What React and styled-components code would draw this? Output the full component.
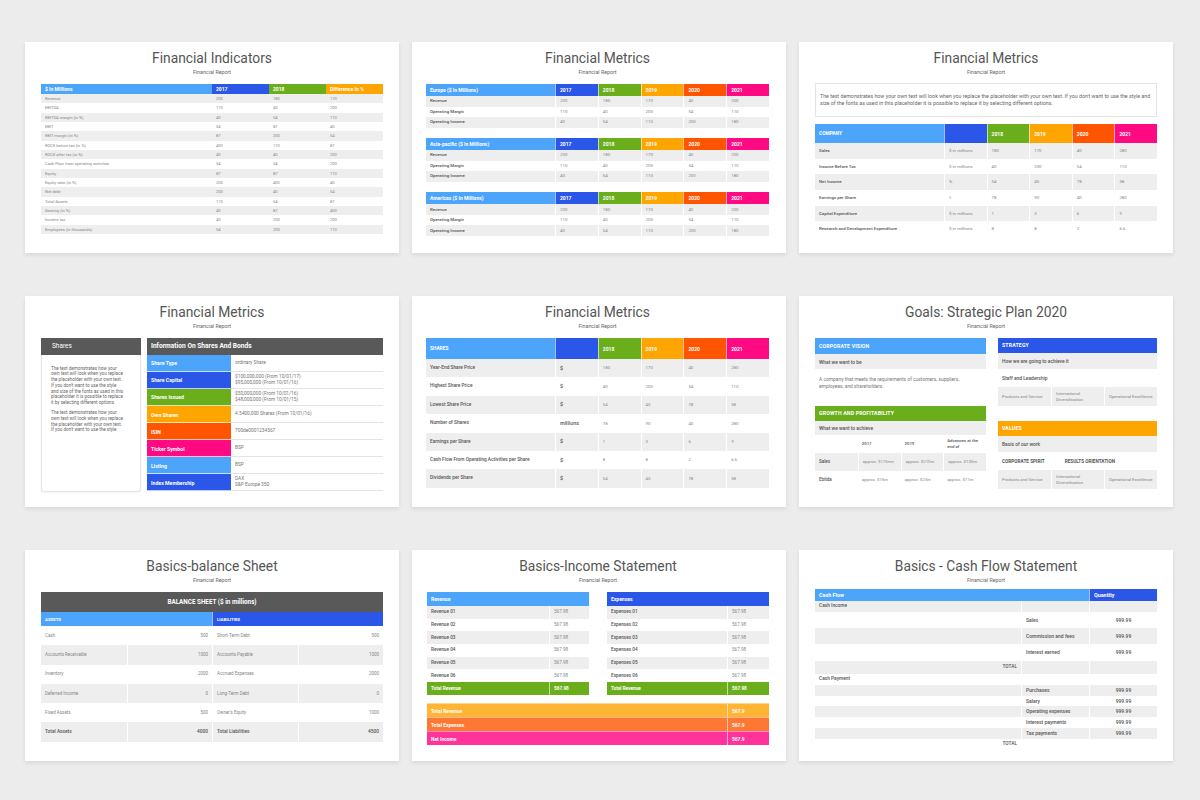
import React from 'react'
import styled, { createGlobalStyle } from 'styled-components'

// palette used by every slide header
const C = {
  sky: '#4da5fb',
  blue: '#2b57e9',
  green: '#6aae1b',
  orange: '#ffa502',
  red: '#ff5500',
  pink: '#ff0a82',
  dark: '#595959',
  row: '#eeeeee',
  lorange: '#ffb433',
  morange: '#ff7833',
  lpink: '#ff3399',
}

const GlobalStyle = createGlobalStyle`
  html, body { margin: 0; padding: 0; background: #ececec; }
  body { font-family: Roboto, "Liberation Sans", sans-serif; }
  * { box-sizing: border-box; }
`

const Page = styled.div`
  width: 1200px;
  height: 800px;
  display: grid;
  grid-template-columns: repeat(3, 374px);
  grid-auto-rows: 211px;
  column-gap: 13px;
  row-gap: 43px;
  padding: 42px 0 0 25px;
`

const Card = styled.section`
  background: #fff;
  box-shadow: 0 2px 4px rgba(0, 0, 0, 0.09);
  display: flex;
  flex-direction: column;
  padding: 7px ${p => p.$pr ?? 16}px 0 ${p => p.$pl ?? 16}px;
  overflow: hidden;
`

const Title = styled.h2`
  margin: 0;
  font-size: 13.8px;
  line-height: 19px;
  font-weight: 400;
  color: #555;
  text-align: center;
`

const Subtitle = styled.div`
  font-size: 5.3px;
  line-height: 8px;
  color: #666;
  text-align: center;
  margin-bottom: ${p => p.$mb ?? 8}px;
`

const Row = styled.div`
  display: grid;
  grid-template-columns: ${p => p.$cols};
  height: ${p => p.$h}px;
  background: ${p => p.$bg || 'transparent'};
  margin-bottom: ${p => p.$mb || 0}px;
`

const HeadCell = styled.div`
  display: flex;
  align-items: center;
  justify-content: ${p => (p.$center ? 'center' : 'flex-start')};
  padding: 0 4px;
  background: ${p => p.$bg};
  color: #fff;
  font-size: ${p => p.$fs || 5}px;
  font-weight: 700;
  white-space: nowrap;
  overflow: hidden;
  border-left: ${p => (p.$sep ? '1px solid rgba(255,255,255,0.6)' : 'none')};
  grid-column: ${p => (p.$span ? `span ${p.$span}` : 'auto')};
`

const Cell = styled.div`
  display: flex;
  align-items: center;
  justify-content: ${p => (p.$align === 'right' ? 'flex-end' : p.$align === 'center' ? 'center' : 'flex-start')};
  padding: 0 4px;
  color: ${p => (p.$strong ? '#555' : '#868686')};
  font-size: ${p => p.$fs || 4.5}px;
  font-weight: ${p => (p.$strong ? 500 : 400)};
  line-height: 1.3;
  white-space: ${p => (p.$wrap ? 'normal' : 'nowrap')};
  overflow: hidden;
  border-left: ${p => (p.$sep ? '1px solid #fff' : 'none')};
  background: ${p => p.$bg || 'transparent'};
`

const stripe = (i, first = true) => ((i % 2 === 0) === first ? C.row : '#fff')

/* ---------- slide 1 ---------- */
const indicators = [
  ['Revenue', 200, 180, 170],
  ['EBITDA', 110, 40, 200],
  ['EBITDA margin (in %)', 40, 54, 110],
  ['EBIT', 54, 87, 40],
  ['EBIT margin (in %)', 87, 200, 54],
  ['ROCE before tax (in %)', 400, 110, 87],
  ['ROCE after tax (in %)', 40, 40, 200],
  ['Cash Flow from operating activities', 54, 54, 200],
  ['Equity', 87, 87, 110],
  ['Equity ratio (in %)', 200, 400, 40],
  ['Net debt', 200, 40, 54],
  ['Total Assets', 110, 54, 87],
  ['Gearing (in %)', 40, 87, 400],
  ['Income tax', 40, 200, 200],
  ['Employees (in thousands)', 54, 200, 110],
]

const IndicatorsSlide = () => {
  const cols = '171px 57px 57px 57px'
  return (
    <Card>
      <Title>Financial Indicators</Title>
      <Subtitle>Financial Report</Subtitle>
      <Row $cols={cols} $h={10}>
        <HeadCell $bg={C.sky}>$ In Millions</HeadCell>
        <HeadCell $bg={C.blue}>2017</HeadCell>
        <HeadCell $bg={C.green}>2018</HeadCell>
        <HeadCell $bg={C.orange}>Difference In %</HeadCell>
      </Row>
      {indicators.map((r, i) => (
        <Row key={i} $cols={cols} $h={9.33} $bg={stripe(i)}>
          {r.map((v, j) => (
            <Cell key={j} $fs={4.1}>{v}</Cell>
          ))}
        </Row>
      ))}
    </Card>
  )
}

/* ---------- slide 2 ---------- */
const years = [['2017', C.blue], ['2018', C.green], ['2019', C.orange], ['2020', C.red], ['2021', C.pink]]
const regionRows = [
  ['Revenue', 200, 180, 170, 40, 200],
  ['Operating Margin', 110, 40, 200, 54, 110],
  ['Operating Income', 40, 54, 110, 200, 180],
]

const Region = styled.div`
  margin-bottom: 10.6px;
`

const RegionSlide = () => {
  const cols = '129px repeat(5, 1fr)'
  return (
    <Card $pl={14} $pr={17}>
      <Title>Financial Metrics</Title>
      <Subtitle>Financial Report</Subtitle>
      {['Europe ($ In Millions)', 'Asia-pacific ($ In Millions)', 'Americas ($ In Millions)'].map(name => (
        <Region key={name}>
          <Row $cols={cols} $h={12}>
            <HeadCell $bg={C.sky}>{name}</HeadCell>
            {years.map(([y, c]) => (
              <HeadCell key={y} $bg={c} $sep>{y}</HeadCell>
            ))}
          </Row>
          {regionRows.map((r, i) => (
            <Row key={i} $cols={cols} $h={10.5} $bg={stripe(i)}>
              {r.map((v, j) => (
                <Cell key={j} $strong={j === 0} $sep={j > 0} $fs={4.4}>{v}</Cell>
              ))}
            </Row>
          ))}
        </Region>
      ))}
    </Card>
  )
}

/* ---------- slide 3 ---------- */
const companyRows = [
  ['Sales', '$ in millions', 180, 170, 40, 280],
  ['Income Before Tax', '$ in millions', 40, 200, 54, 110],
  ['Net Income', '%', 54, 45, 78, 58],
  ['Earnings per Share', '€', 78, 90, 40, 280],
  ['Capital Expenditure', '$ in millions', 1, 3, 6, 9],
  ['Research and Development Expenditure', '$ in millions', 8, 8, 2, 6.6],
]

const Note = styled.p`
  margin: 0 0 7px;
  height: 34px;
  border: 1px solid #e4e4e4;
  padding: 0 4px;
  display: flex;
  align-items: center;
  font-size: 5.3px;
  line-height: 7px;
  color: #666;
`

const placeholder =
  "The text demonstrates how your own text will look when you replace the placeholder with your own text. If you don't want to use the style and size of the fonts as used in this placeholder it is possible to replace it by selecting different options."

const CompanySlide = () => {
  const cols = '129px repeat(5, 1fr)'
  return (
    <Card>
      <Title>Financial Metrics</Title>
      <Subtitle $mb={7}>Financial Report</Subtitle>
      <Note>{placeholder}</Note>
      <Row $cols={cols} $h={19}>
        <HeadCell $bg={C.sky} $fs={4.8}>COMPANY</HeadCell>
        <HeadCell $bg={C.blue} $sep />
        {years.slice(1).map(([y, c]) => (
          <HeadCell key={y} $bg={c} $sep>{y}</HeadCell>
        ))}
      </Row>
      {companyRows.map((r, i) => (
        <Row key={i} $cols={cols} $h={15.7} $bg={stripe(i)}>
          {r.map((v, j) => (
            <Cell key={j} $strong={j === 0} $sep={j > 0} $fs={4.4}>{v}</Cell>
          ))}
        </Row>
      ))}
    </Card>
  )
}

/* ---------- slide 4 ---------- */
const Split = styled.div`
  display: flex;
  gap: ${p => p.$gap}px;
  height: ${p => p.$h}px;
`

const SidePanel = styled.div`
  width: 100px;
  display: flex;
  flex-direction: column;
`

const DarkBar = styled.div`
  height: ${p => p.$h || 16.7}px;
  background: ${C.dark};
  color: #fff;
  display: flex;
  align-items: center;
  justify-content: ${p => (p.$center ? 'center' : 'flex-start')};
  padding-left: ${p => p.$pl ?? 4}px;
  font-size: ${p => p.$fs || 6.5}px;
  font-weight: ${p => (p.$bold ? 700 : 400)};
`

const PanelText = styled.div`
  flex: 1;
  border: 1px solid #e6e6e6;
  border-top: none;
  border-radius: 0 0 3px 3px;
  box-shadow: 0 1px 2px rgba(0, 0, 0, 0.05);
  padding: 11px 15px 0 9px;
  font-size: 4.6px;
  line-height: 5.7px;
  color: #666;
  p { margin: 0 0 4.5px; }
`

const InfoTable = styled.div`
  flex: 1;
  display: flex;
  flex-direction: column;
`

const InfoRow = styled.div`
  display: grid;
  grid-template-columns: 84px 1fr;
  height: 17.1px;
`

const InfoLabel = styled.div`
  background: ${p => p.$bg};
  color: #fff;
  font-weight: 700;
  font-size: 5.2px;
  display: flex;
  align-items: center;
  padding-left: 4px;
  box-shadow: inset 0 -1px 0 rgba(255, 255, 255, 0.7);
`

const InfoValue = styled.div`
  color: #777;
  font-size: 4.8px;
  line-height: 6px;
  display: flex;
  flex-direction: column;
  justify-content: center;
  padding-left: 4px;
  border-bottom: 1px solid #e4e4e4;
`

const shares = [
  ['Share Type', C.sky, ['ordinary Share']],
  ['Share Capital', C.blue, ['$100,000,000 (From 10/01/17)', '$95,000,000 (From 10/01/16)']],
  ['Shares Issued', C.green, ['$50,000,000 (From 10/01/16)', '$48,000,000 (From 10/01/15)']],
  ['Own Shares', C.orange, ['4.5400,000 Shares (From 10/01/16)']],
  ['ISIN', C.red, ['700de0001234567']],
  ['Ticker Symbol', C.pink, ['BSP']],
  ['Listing', C.sky, ['BSP']],
  ['Index Membership', C.blue, ['DAX', 'S&P Europe 350']],
]

const SharesSlide = () => (
  <Card>
    <Title>Financial Metrics</Title>
    <Subtitle $mb={8}>Financial Report</Subtitle>
    <Split $gap={6} $h={153.5}>
      <SidePanel>
        <DarkBar $pl={11}>Shares</DarkBar>
        <PanelText>
          <p>{placeholder}</p>
          <p>The text demonstrates how your own text will look when you replace the placeholder with your own text. If you don't want to use the style</p>
        </PanelText>
      </SidePanel>
      <InfoTable>
        <DarkBar $bold $fs={6.6}>Information On Shares And Bonds</DarkBar>
        {shares.map(([label, bg, lines]) => (
          <InfoRow key={label}>
            <InfoLabel $bg={bg}>{label}</InfoLabel>
            <InfoValue>
              {lines.map(l => (
                <span key={l}>{l}</span>
              ))}
            </InfoValue>
          </InfoRow>
        ))}
      </InfoTable>
    </Split>
  </Card>
)

/* ---------- slide 5 ---------- */
const shareRows = [
  ['Year-End Share Price', '$', 180, 170, 40, 280],
  ['Highest Share Price', '$', 40, 200, 54, 110],
  ['Lowest Share Price', '$', 54, 45, 78, 58],
  ['Number of Shares', 'millions', 78, 90, 40, 280],
  ['Earnings per Share', '$', 1, 3, 6, 9],
  ['Cash Flow From Operating Activities per Share', '$', 8, 8, 2, 6.6],
  ['Dividends per Share', '$', 54, 45, 78, 58],
]

const SharePriceSlide = () => {
  const cols = '129px repeat(5, 1fr)'
  return (
    <Card $pl={14} $pr={17}>
      <Title>Financial Metrics</Title>
      <Subtitle $mb={8}>Financial Report</Subtitle>
      <Row $cols={cols} $h={21}>
        <HeadCell $bg={C.sky} $fs={4.8}>SHARES</HeadCell>
        <HeadCell $bg={C.blue} $sep />
        {years.slice(1).map(([y, c]) => (
          <HeadCell key={y} $bg={c} $sep>{y}</HeadCell>
        ))}
      </Row>
      {shareRows.map((r, i) => (
        <Row key={i} $cols={cols} $h={18.4} $bg={stripe(i)}>
          {r.map((v, j) => (
            <Cell key={j} $strong={j < 2} $sep={j > 0} $fs={j === 1 ? 5.4 : j === 0 ? 4.8 : 4.3}>{v}</Cell>
          ))}
        </Row>
      ))}
    </Card>
  )
}

/* ---------- slide 6 ---------- */
const PlanCol = styled.div`
  width: ${p => p.$w}px;
  display: flex;
  flex-direction: column;
`

const PlanHead = styled.div`
  height: ${p => p.$h || 14.6}px;
  background: ${p => p.$bg};
  color: #fff;
  font-weight: 700;
  font-size: 5.2px;
  letter-spacing: 0.15px;
  display: flex;
  align-items: center;
  padding-left: 4px;
  margin-top: ${p => p.$mt || 0}px;
`

const PlanLine = styled.div`
  height: ${p => p.$h}px;
  background: ${p => (p.$gray ? C.row : '#fff')};
  color: #555;
  font-weight: 500;
  font-size: 4.9px;
  display: flex;
  align-items: center;
  padding-left: 4px;
`

const PlanText = styled.p`
  margin: 0;
  height: 37px;
  padding: 7px 4px 0;
  font-size: 4.9px;
  line-height: 6.5px;
  color: #777;
`

const TripleRow = styled.div`
  height: 18.5px;
  background: ${C.row};
  display: grid;
  grid-template-columns: repeat(3, 1fr);
`

const SpiritRow = styled.div`
  height: 18.3px;
  display: grid;
  grid-template-columns: 1fr 1fr 1fr;
  align-items: center;
  color: #555;
  font-weight: 700;
  font-size: 4.7px;
  padding-left: 4px;
  span:last-child { grid-column: span 2; padding-left: 11px; }
`

const triple = ['Products and Service', 'International Diversification', 'Operational Excellence']

const PlanSlide = () => {
  const cols = 'repeat(4, 1fr)'
  return (
    <Card>
      <Title>Goals: Strategic Plan 2020</Title>
      <Subtitle $mb={8}>Financial Report</Subtitle>
      <Split $gap={12} $h={152}>
        <PlanCol $w={171}>
          <PlanHead $bg={C.sky} $h={16}>CORPORATE VISION</PlanHead>
          <PlanLine $gray $h={15}>What we want to be</PlanLine>
          <PlanText>A company that meets the requirements of customers, suppliers, employees, and shareholders.</PlanText>
          <PlanHead $bg={C.green}>GROWTH AND PROFITABILITY</PlanHead>
          <PlanLine $gray $h={14}>What we want to achieve</PlanLine>
          <Row $cols={cols} $h={18}>
            <Cell />
            <Cell $strong $fs={4.3}>2017</Cell>
            <Cell $strong $fs={4.3}>2019</Cell>
            <Cell $strong $wrap $fs={4.3}>Advances at the end of</Cell>
          </Row>
          <Row $cols={cols} $h={18.3} $bg={C.row}>
            <Cell $strong $fs={4.5}>Sales</Cell>
            <Cell $sep $wrap $fs={4.3}>approx. $175mn</Cell>
            <Cell $sep $fs={4.3}>approx. $210m</Cell>
            <Cell $sep $fs={4.3}>approx. $130m</Cell>
          </Row>
          <Row $cols={cols} $h={18.7}>
            <Cell $strong $fs={4.5}>Ebitda</Cell>
            <Cell $fs={4.3}>approx. $16m</Cell>
            <Cell $fs={4.3}>approx. $23m</Cell>
            <Cell $fs={4.3}>approx. $11m</Cell>
          </Row>
        </PlanCol>
        <PlanCol $w={159}>
          <PlanHead $bg={C.blue}>STRATEGY</PlanHead>
          <PlanLine $gray $h={16.4}>How we are going to achieve it</PlanLine>
          <PlanLine $h={18.3}>Staff and Leadership</PlanLine>
          <TripleRow>
            {triple.map((t, j) => (
              <Cell key={t} $wrap $sep={j > 0} $fs={4.3}>{t}</Cell>
            ))}
          </TripleRow>
          <PlanHead $bg={C.orange} $mt={15.3}>VALUES</PlanHead>
          <PlanLine $gray $h={16.3}>Basis of our work</PlanLine>
          <SpiritRow>
            <span>CORPORATE SPIRIT</span>
            <span>RESULTS ORIENTATION</span>
          </SpiritRow>
          <TripleRow>
            {triple.map((t, j) => (
              <Cell key={t} $wrap $sep={j > 0} $fs={4.3}>{t}</Cell>
            ))}
          </TripleRow>
        </PlanCol>
      </Split>
    </Card>
  )
}

/* ---------- slide 7 ---------- */
const balance = [
  ['Cash', 500, 'Short-Term Debt', 500],
  ['Accounts Receivable', 1000, 'Accounts Payable', 1000],
  ['Inventory', 2000, 'Accrued Expenses', 2000],
  ['Deferred Income', 0, 'Long-Term Debt', 0],
  ['Fixed Assets', 500, "Owner's Equity", 1000],
  ['Total Assets', 4000, 'Total Liabilities', 4500],
]

const BalanceSlide = () => {
  const cols = 'repeat(4, 1fr)'
  return (
    <Card>
      <Title>Basics-balance Sheet</Title>
      <Subtitle $mb={8}>Financial Report</Subtitle>
      <DarkBar $h={20} $center $pl={0} $bold $fs={6.3}>BALANCE SHEET ($ in millions)</DarkBar>
      <Row $cols="1fr 1fr" $h={14}>
        <HeadCell $bg={C.sky} $fs={4.3}>ASSETS</HeadCell>
        <HeadCell $bg={C.blue} $fs={4.3} $sep>LIABILITIES</HeadCell>
      </Row>
      {balance.map((r, i) => {
        const total = i === balance.length - 1
        return (
          <Row key={i} $cols={cols} $h={19.3} $bg={stripe(i, false)}>
            {r.map((v, j) => (
              <Cell key={j} $align={j % 2 ? 'right' : 'left'} $sep={j > 0} $strong={total} $fs={total ? 4.8 : 4.5}>
                {v}
              </Cell>
            ))}
          </Row>
        )
      })}
    </Card>
  )
}

/* ---------- slide 8 ---------- */
const Ledger = styled.div`
  width: 162px;
`

const SumBlock = styled.div`
  margin-top: 8px;
`

const SumBar = styled.div`
  display: grid;
  grid-template-columns: 1fr 42px;
  height: 14.1px;
  background: ${p => p.$bg};
  border-top: 1px solid rgba(255, 255, 255, 0.45);
  color: #fff;
  font-weight: 700;
  font-size: 4.9px;
  span { display: flex; align-items: center; padding-left: 4px; }
  span + span { border-left: 1px solid rgba(255, 255, 255, 0.6); }
`

const LedgerTable = ({ name, bg, cols, label }) => (
  <Ledger>
    <Row $cols="1fr" $h={14.3}>
      <HeadCell $bg={bg}>{name}</HeadCell>
    </Row>
    {[1, 2, 3, 4, 5, 6].map((n, i) => (
      <Row key={n} $cols={cols} $h={12.7} $bg={stripe(i)}>
        <Cell $strong $fs={4.7}>{label} 0{n}</Cell>
        <Cell $sep $fs={4.6}>567.98</Cell>
      </Row>
    ))}
    <Row $cols={cols} $h={13}>
      <HeadCell $bg={C.green} $fs={4.7}>Total Revenue</HeadCell>
      <HeadCell $bg={C.green} $fs={4.7} $sep>567.98</HeadCell>
    </Row>
  </Ledger>
)

const IncomeSlide = () => (
  <Card $pl={15} $pr={17}>
    <Title>Basics-Income Statement</Title>
    <Subtitle $mb={7.7}>Financial Report</Subtitle>
    <Split $gap={18} $h={103.5}>
      <LedgerTable name="Revenue" bg={C.sky} cols="122px 40px" label="Revenue" />
      <LedgerTable name="Expenses" bg={C.blue} cols="120px 42px" label="Expenses" />
    </Split>
    <SumBlock>
      <SumBar $bg={C.lorange}><span>Total Revenue</span><span>567.9</span></SumBar>
      <SumBar $bg={C.morange}><span>Total Expenses</span><span>567.9</span></SumBar>
      <SumBar $bg={C.lpink}><span>Net Income</span><span>567.9</span></SumBar>
    </SumBlock>
  </Card>
)

/* ---------- slide 9 ---------- */
const cash = [
  ['Cash Income', '', '', 10.3, true],
  ['', 'Sales', '999.99', 16.7, false],
  ['', 'Commission and fees', '999.99', 16, true],
  ['', 'Interest earned', '999.99', 16.3, false],
  ['TOTAL', '', '', 13.7, true],
  ['Cash Payment', '', '', 10.7, false],
  ['', 'Purchases', '999.99', 10.6, true],
  ['', 'Salary', '999.99', 10.7, false],
  ['', 'Operating expenses', '999.99', 10.7, true],
  ['', 'Interest payments', '999.99', 10.6, false],
  ['', 'Tax payments', '999.99', 11.4, true],
  ['TOTAL', '', '', 10.5, false],
]

const CashSlide = () => {
  const cols = '206px 68px 68px'
  return (
    <Card>
      <Title>Basics - Cash Flow Statement</Title>
      <Subtitle $mb={5}>Financial Report</Subtitle>
      <Row $cols={cols} $h={12.3}>
        <HeadCell $bg={C.sky} $span={2} $fs={5.4}>Cash Flow</HeadCell>
        <HeadCell $bg={C.blue} $sep $fs={5.4}>Quantity</HeadCell>
      </Row>
      {cash.map(([a, b, c, h, gray], i) => (
        <Row key={i} $cols={cols} $h={h} $bg={gray ? C.row : '#fff'}>
          <Cell $strong $fs={4.8} $align={a === 'TOTAL' ? 'right' : 'left'}>{a}</Cell>
          <Cell $strong $sep $fs={5}>{b}</Cell>
          <Cell $strong $sep $fs={5} $align="center">{c}</Cell>
        </Row>
      ))}
    </Card>
  )
}

const App = () => (
  <>
    <GlobalStyle />
    <Page>
      <IndicatorsSlide />
      <RegionSlide />
      <CompanySlide />
      <SharesSlide />
      <SharePriceSlide />
      <PlanSlide />
      <BalanceSlide />
      <IncomeSlide />
      <CashSlide />
    </Page>
  </>
)

export default App
